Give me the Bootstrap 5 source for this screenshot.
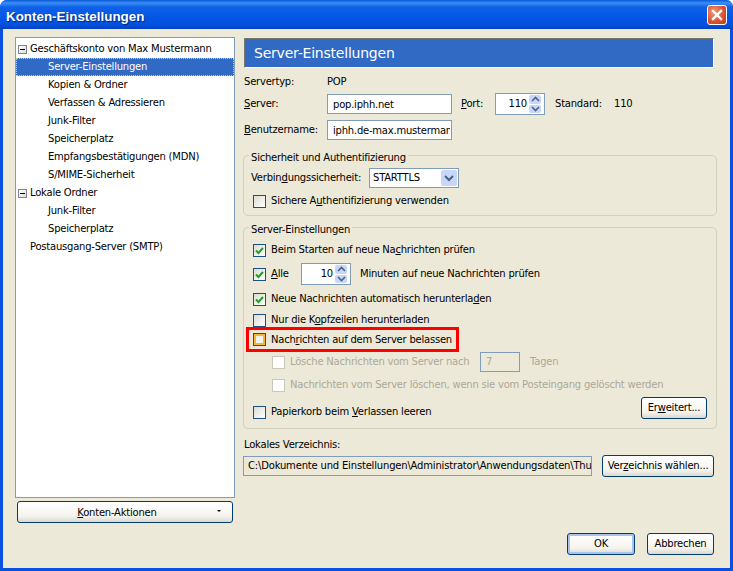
<!DOCTYPE html>
<html lang="de">
<head>
<meta charset="utf-8">
<title>Konten-Einstellungen</title>
<link href="https://cdn.jsdelivr.net/npm/bootstrap@5.3.0/dist/css/bootstrap.min.css" rel="stylesheet">
<style>
html,body{margin:0;padding:0;width:733px;height:571px;overflow:hidden;background:#fff}
body,.btn,.form-control,.form-select{font-family:"DejaVu Sans",sans-serif;font-size:10px;line-height:1;color:#000;letter-spacing:-.22px}
.xp-win{width:733px;height:571px;border-radius:7px 7px 0 0;overflow:hidden;background:#0a4fe0}
.xp-title{height:29px;padding:0 6px;background:linear-gradient(180deg,#0a58d8 0,#3b8ff5 3px,#0f62e8 7px,#0355e5 18px,#0450df 25px,#0340bd 29px);color:#fff;font-family:"Liberation Sans",sans-serif;font-weight:700;font-size:13.4px;letter-spacing:0;text-shadow:1px 1px 1px #02287a}
.xp-title-text{padding-top:5px}
.xp-close{width:20px;height:20px;background:radial-gradient(circle at 35% 35%,#ee9a7d,#d9512c 60%,#bf3a16);border:1px solid #fff;border-radius:3px}
.xp-body{height:539px;margin:0 3px 3px;background:#ece9d8;padding:8px 13px 0 12px;gap:8px}
.xp-side{width:220px;flex:none}
.xp-tree{height:461px;background:#fff;border:1px solid #7f9db9;border-radius:0;padding:2px 0 0;display:block}
.xp-tree .list-group-item{height:18px;padding:0 0 0 32px;border:0;border-radius:0;background:transparent;font-size:10px;color:#000;display:flex;align-items:center}
.xp-tree .xp-top{padding-left:14px}
.xp-tree .list-group-item.active{background:#316ac5;color:#fff;outline:1px dotted #e7c77a;outline-offset:-1px;margin:0}
.xp-exp{width:9px;height:9px;border:1px solid #7f7fa8;margin-left:-12px;margin-right:3px;flex:none;background:linear-gradient(135deg,#fff,#dcdcd0);display:flex;align-items:center;justify-content:center}
.xp-exp i{display:block;width:5px;height:1px;background:#000}
.xp-btn{background:linear-gradient(180deg,#fff 0,#f5f4ee 70%,#dcd8cc 100%);border:1px solid #003c74;border-radius:3px;padding:0;color:#000;display:inline-flex;align-items:center;justify-content:center}
.xp-acc{width:216px;height:22px;margin:3px 2px 0;position:relative;padding:1px 16px 0 0}
.xp-caret{position:absolute;right:11px;top:8px;border:2.5px solid transparent;border-top-color:#000;border-bottom:0}
.xp-main{width:474px;height:531px;flex:none}
.xp-head{height:30px;margin:1px 3px 0 1px;background:#316ac5;color:#fff;font-size:14px;padding-left:9px;border:1px solid;border-color:#7a7768 #fff #fff #7a7768}
.xp-row{display:flex;align-items:center;white-space:nowrap}
.xp-lab{width:84px;padding-left:1px}
.form-control.xp-in{height:20px;border:1px solid #7f9db9;border-radius:0;padding:0 1px 0 5px;min-height:0;box-shadow:none;background-color:#fff}
.form-control.xp-w{width:125px}
.xp-spin{height:22px;border:1px solid #7f9db9;background:#fff;display:flex;justify-content:flex-end;align-items:center;padding:1px}
.xp-spin span{padding-right:2px}
.xp-arrows{width:14px;height:18px;display:flex;flex-direction:column;gap:1px;padding:0}
.xp-arrows b{flex:1;background:#c8d6f8;border-radius:2px;display:flex;align-items:center;justify-content:center}
.xp-arrows svg{display:block}
.xp-group{position:relative;border:1px solid #d0d0bf;border-radius:5px;margin:0}
.xp-legend{position:absolute;left:5px;top:-4px;background:#ece9d8;padding:0 2px;height:12px;display:flex;align-items:center}
.xp-g1{height:61px;margin-top:15px;padding:12px 9px 0 7px}
.xp-g2{height:202px;margin-top:11px;padding:11px 9px 0 9px}
.xp-sel{width:90px;height:20px;border:1px solid #7f9db9;background:#fff;display:flex;align-items:center;padding:0 1px 0 3px}
.xp-sel b{width:16px;height:16px;margin-left:auto;background:#c8d6f8;border-radius:2px;display:flex;align-items:center;justify-content:center}
.xp-ck{width:13px;height:13px;border:1px solid #1c5180;background:linear-gradient(135deg,#dcdcd3,#fff);margin-right:5px;flex:none;display:flex;align-items:center;justify-content:center}
.xp-ck.off{border-color:#cac8bb;background:#fff}
.xp-ck.hot{background:#f5f4ea;box-shadow:inset 0 0 0 2px #f8b636}
.xp-dis{color:#aca899}
.xp-redbox{outline:3px solid #f00;height:19px;margin:0 0 0 -4px;padding-left:4px;width:207px}
.xp-in-dis{width:40px;height:20px;border:1px solid #7f9db9;background:#ece9d8;display:flex;align-items:center;padding-left:5px;margin:0 10px 0 0}
.xp-path{width:349px;height:20px;border:1px solid #7f9db9;background:#ece9d8;display:flex;align-items:center;padding:0 1px 0 4px;overflow:hidden;letter-spacing:-.18px}
.xp-foot{margin-top:56px}
.xp-ok{border-color:#003c74;box-shadow:inset 0 0 0 2px #a9c3ef}
u{text-decoration-thickness:1px;text-underline-offset:1px}
</style>
</head>
<body>
<div class="xp-win">
  <div class="xp-title d-flex align-items-center justify-content-between">
    <span class="xp-title-text">Konten-Einstellungen</span>
    <span class="xp-close d-flex align-items-center justify-content-center"><svg width="12" height="12" viewBox="0 0 12 12"><path d="M2 2l8 8M10 2l-8 8" stroke="#fff" stroke-width="2.4" stroke-linecap="square"/></svg></span>
  </div>
  <div class="xp-body d-flex">
    <div class="xp-side">
      <div class="list-group xp-tree">
        <div class="list-group-item xp-top"><span class="xp-exp"><i></i></span>Geschäftskonto von Max Mustermann</div>
        <div class="list-group-item active">Server-Einstellungen</div>
        <div class="list-group-item">Kopien &amp; Ordner</div>
        <div class="list-group-item">Verfassen &amp; Adressieren</div>
        <div class="list-group-item">Junk-Filter</div>
        <div class="list-group-item">Speicherplatz</div>
        <div class="list-group-item">Empfangsbestätigungen (MDN)</div>
        <div class="list-group-item">S/MIME-Sicherheit</div>
        <div class="list-group-item xp-top"><span class="xp-exp"><i></i></span>Lokale Ordner</div>
        <div class="list-group-item">Junk-Filter</div>
        <div class="list-group-item">Speicherplatz</div>
        <div class="list-group-item xp-top">Postausgang-Server (SMTP)</div>
      </div>
      <button type="button" class="btn xp-btn xp-acc"><span><u>K</u>onten-Aktionen</span><span class="xp-caret"></span></button>
    </div>
    <div class="xp-main">
      <div class="xp-head d-flex align-items-center">Server-Einstellungen</div>

      <div class="xp-row" style="height:20px;margin-top:4px"><span class="xp-lab">Servertyp:</span><span>POP</span></div>
      <div class="xp-row" style="height:22px;margin-top:1px">
        <span class="xp-lab"><u>S</u>erver:</span>
        <input class="form-control xp-in xp-w" value="pop.iphh.net">
        <span style="margin-left:9px;width:34px"><u>P</u>ort:</span>
        <span class="xp-spin" style="width:50px"><span>110</span><span class="xp-arrows"><b><svg width="9" height="6" viewBox="0 0 9 6"><path d="M1 5l3.500-3.500L8 5" fill="none" stroke="#4d6185" stroke-width="1.600"/></svg></b><b><svg width="9" height="6" viewBox="0 0 9 6"><path d="M1 1l3.500 3.500L8 1" fill="none" stroke="#4d6185" stroke-width="1.600"/></svg></b></span></span>
        <span style="margin-left:10px;width:59px">Standard:</span><span>110</span>
      </div>
      <div class="xp-row" style="height:20px;margin-top:5px">
        <span class="xp-lab"><u>B</u>enutzername:</span>
        <input class="form-control xp-in xp-w" value="iphh.de-max.musterman">
      </div>

      <div class="xp-group xp-g1">
        <span class="xp-legend">Sicherheit und Authentifizierung</span>
        <div class="xp-row" style="height:20px">
          <span style="width:118px">Verbin<u>d</u>ungssicherheit:</span>
          <span class="xp-sel"><span>STARTTLS</span><b><svg width="10" height="7" viewBox="0 0 10 7"><path d="M1 1l4 4 4-4" fill="none" stroke="#4d6185" stroke-width="2"/></svg></b></span>
        </div>
        <div class="xp-row" style="height:20px;margin-top:3px;padding-left:2px">
          <span class="xp-ck"></span><span>Sichere A<u>u</u>thentifizierung verwenden</span>
        </div>
      </div>

      <div class="xp-group xp-g2">
        <span class="xp-legend">Server-Einstellungen</span>
        <div class="xp-row" style="height:22px">
          <span class="xp-ck"><svg width="9" height="9" viewBox="0 0 9 9"><path d="M1 4.500l2.500 2.500L8 2" fill="none" stroke="#21a121" stroke-width="2"/></svg></span><span>Beim Starten auf neue Na<u>c</u>hrichten prüfen</span>
        </div>
        <div class="xp-row" style="height:22px;margin-top:2px">
          <span class="xp-ck"><svg width="9" height="9" viewBox="0 0 9 9"><path d="M1 4.500l2.500 2.500L8 2" fill="none" stroke="#21a121" stroke-width="2"/></svg></span><span style="width:30px"><u>A</u>lle</span>
          <span class="xp-spin" style="width:50px"><span>10</span><span class="xp-arrows"><b><svg width="9" height="6" viewBox="0 0 9 6"><path d="M1 5l3.500-3.500L8 5" fill="none" stroke="#4d6185" stroke-width="1.600"/></svg></b><b><svg width="9" height="6" viewBox="0 0 9 6"><path d="M1 1l3.500 3.500L8 1" fill="none" stroke="#4d6185" stroke-width="1.600"/></svg></b></span></span>
          <span style="margin-left:9px">Minuten auf neue Nachrichten prüfen</span>
        </div>
        <div class="xp-row" style="height:22px;margin-top:3px">
          <span class="xp-ck"><svg width="9" height="9" viewBox="0 0 9 9"><path d="M1 4.500l2.500 2.500L8 2" fill="none" stroke="#21a121" stroke-width="2"/></svg></span><span>Neue Nachrichten automatisch herunterla<u>d</u>en</span>
        </div>
        <div class="xp-row" style="height:20px">
          <span class="xp-ck"></span><span>Nur die K<u>o</u>pfzeilen herunterladen</span>
        </div>
        <div class="xp-row xp-redbox">
          <span class="xp-ck hot"></span><span>Nach<u>r</u>ichten auf dem Server belassen</span>
        </div>
        <div class="xp-row xp-dis" style="height:20px;margin-top:3px;padding-left:19px">
          <span class="xp-ck off"></span><span style="width:190px">Lösche Nachrichten vom Server nach</span>
          <span class="xp-in-dis">7</span><span>Tagen</span>
        </div>
        <div class="xp-row xp-dis" style="height:20px;margin-top:3px;padding-left:19px">
          <span class="xp-ck off"></span><span>Nachrichten vom Server löschen, wenn sie vom Posteingang gelöscht werden</span>
        </div>
        <div class="xp-row justify-content-between" style="height:22px;margin-top:2px">
          <span class="d-flex align-items-center pt-2"><span class="xp-ck"></span><span>Papierkorb beim <u>V</u>erlassen leeren</span></span>
          <button type="button" class="btn xp-btn" style="width:66px;height:22px">Er<u>w</u>eitert...</button>
        </div>
      </div>

      <div class="xp-row" style="height:12px;margin-top:10px;padding-left:1px">Lokales Verzeichnis:</div>
      <div class="xp-row" style="height:22px;margin-top:4px">
        <span class="xp-path">C:\Dokumente und Einstellungen\Administrator\Anwendungsdaten\Thu</span>
        <button type="button" class="btn xp-btn" style="width:112px;height:22px;margin-left:10px">Ver<u>z</u>eichnis wählen...</button>
      </div>
      <div class="xp-row justify-content-end xp-foot" style="padding-right:3px">
        <button type="button" class="btn xp-btn xp-ok" style="width:68px;height:22px">OK</button>
        <button type="button" class="btn xp-btn" style="width:67px;height:22px;margin-left:12px">Abbrechen</button>
      </div>
    </div>
  </div>
</div>
</body>
</html>
